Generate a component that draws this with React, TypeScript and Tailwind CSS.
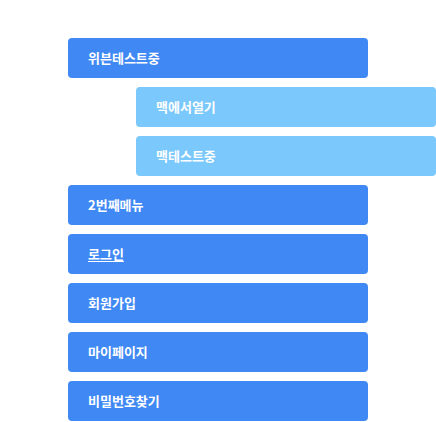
import React from 'react';

type MenuItem = {
  label: string;
  sub?: boolean;
  underline?: boolean;
};

const items: MenuItem[] = [
  { label: '위븐테스트중' },
  { label: '맥에서열기', sub: true },
  { label: '맥테스트중', sub: true },
  { label: '2번째메뉴' },
  { label: '로그인', underline: true },
  { label: '회원가입' },
  { label: '마이페이지' },
  { label: '비밀번호찾기' },
];

const App: React.FC = () => {
  return (
    <div
      className="w-[436px] h-[422px] bg-white overflow-hidden pt-[38px] pl-[68px] flex flex-col gap-[9px]"
      style={{ fontFamily: '"Noto Sans CJK KR", "Noto Sans", sans-serif' }}
    >
      {items.map((item) => (
        <a
          key={item.label}
          href="#"
          className={`flex items-center shrink-0 w-[300px] h-[40px] rounded-[4px] pl-[20px] text-[13px] font-semibold text-white ${
            item.sub ? 'ml-[68px] bg-[#7bc8fc]' : 'bg-[#4089f5]'
          }`}
        >
          <span className={item.underline ? 'underline underline-offset-2' : ''}>{item.label}</span>
        </a>
      ))}
    </div>
  );
};

export default App;
